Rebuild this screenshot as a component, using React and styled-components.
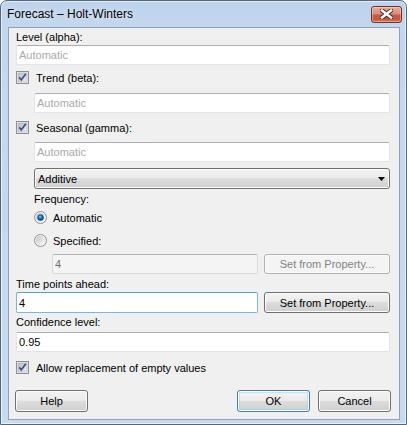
import React from "react";
import styled, { createGlobalStyle } from "styled-components";

const GlobalStyle = createGlobalStyle`
  html, body { margin: 0; padding: 0; background: #ffffff; }
  body { font-family: "Liberation Sans", Arial, sans-serif; }
  * { box-sizing: border-box; }
`;

const Window = styled.div`
  width: 407px;
  height: 425px;
  border: 1px solid #55677e;
  border-radius: 7px 7px 0 0;
  background: linear-gradient(180deg, #bdd2ec 0px, #c3d7ee 26px, #c7daf0 100%);
  box-shadow: inset 0 0 0 1px rgba(255, 255, 255, 0.6);
  display: flex;
  flex-direction: column;
`;

const TitleBar = styled.div`
  height: 26px;
  display: flex;
  align-items: center;
  justify-content: space-between;
  padding: 0 4px 1px 6px;
`;

const Title = styled.span`
  font-size: 12px;
  color: #000;
  text-shadow: 0 0 6px rgba(255, 255, 255, 0.9);
`;

const CloseButton = styled.div`
  width: 31px;
  height: 17px;
  margin-top: 1px;
  border: 1px solid #6f3226;
  border-radius: 3px;
  background: linear-gradient(180deg, #e9ab9b 0%, #dc8c77 45%, #c85a3f 55%, #c9553a 80%, #d77a5e 100%);
  box-shadow: inset 0 0 0 1px rgba(255, 255, 255, 0.35);
  display: flex;
  align-items: center;
  justify-content: center;
`;

const Body = styled.div`
  flex: 1;
  margin: 0 6px 4px 7px;
  border: 1px solid #8ea4bd;
  background: #f0f0f0;
  padding: 3px 9px 0 7px;
  display: flex;
  flex-direction: column;
  font-size: 11px;
  color: #000;
`;

const Label = styled.div`
  flex: none;
  height: 13px;
  line-height: 13px;
  margin-top: ${(p) => p.$mt || 0}px;
  margin-left: ${(p) => p.$ml || 0}px;
  white-space: nowrap;
`;

const TextBox = styled.input`
  display: block;
  flex: none;
  height: ${(p) => p.$h || 20}px;
  width: auto;
  ${(p) => (p.$grow ? "flex: 1; min-width: 0;" : "")}
  margin: ${(p) => p.$mt || 0}px 0 0 ${(p) => p.$ml || 0}px;
  padding: 0 2px;
  font: inherit;
  font-size: 11px;
  color: #000;
  background: #ffffff;
  border: 1px solid #e2e3ea;
  border-top-color: #abadb3;
  border-radius: 2px;
  outline: none;
  &::placeholder { color: #a9a9a9; }
  &:disabled {
    background: #f4f4f4;
    border-color: #d9d9d9;
    border-top-color: #adb2b5;
    color: #6d6d6d;
  }
  ${(p) =>
    p.$focused &&
    `
    border: 1px solid #7eb4ea;
    border-top-color: #569de5;
  `}
`;

const Row = styled.div`
  flex: none;
  display: flex;
  align-items: center;
  gap: ${(p) => p.$gap || 0}px;
  margin-top: ${(p) => p.$mt || 0}px;
  margin-left: ${(p) => p.$ml || 0}px;
`;

const Button = styled.button`
  width: ${(p) => p.$w || 73}px;
  height: ${(p) => p.$h || 22}px;
  flex: none;
  padding: 0;
  margin-left: ${(p) => p.$ml || 0}px;
  font: inherit;
  font-size: 11px;
  color: #000;
  border: 1px solid ${(p) => (p.$default ? "#3c7fb1" : "#707070")};
  border-radius: 3px;
  background: linear-gradient(180deg, #f2f2f2 0%, #ebebeb 49%, #dddddd 50%, #cfcfcf 100%);
  box-shadow: ${(p) =>
    p.$default
      ? "inset 0 0 0 1px #ffffff, inset 0 0 0 2px rgba(110, 200, 240, 0.35)"
      : "inset 0 0 0 1px #fcfcfc"};
  &:disabled {
    color: #838383;
    border-color: #adb2b5;
    background: #f4f4f4;
    box-shadow: inset 0 0 0 1px #fcfcfc;
  }
`;

const Dropdown = styled.div`
  flex: none;
  height: 21px;
  margin: 6px 0 0 18px;
  border: 1px solid #707070;
  border-radius: 3px;
  background: linear-gradient(180deg, #f2f2f2 0%, #ebebeb 49%, #dddddd 50%, #cfcfcf 100%);
  box-shadow: inset 0 0 0 1px #fcfcfc;
  display: flex;
  align-items: center;
  justify-content: space-between;
  padding: 0 4px 0 3px;
`;

const CheckRow = styled.div`
  flex: none;
  display: flex;
  align-items: center;
  height: 13px;
  margin-top: ${(p) => p.$mt || 0}px;
  margin-left: ${(p) => p.$ml || 0}px;
  gap: ${(p) => p.$gap || 7}px;
`;

const ButtonBar = styled.div`
  flex: none;
  display: flex;
  align-items: center;
  margin: 16px -1px 0 -1px;
`;

const Spacer = styled.div`
  flex: 1;
`;

function CheckBox() {
  return (
    <svg width="13" height="13" viewBox="0 0 13 13">
      <defs>
        <linearGradient id="cbg" x1="0" y1="0" x2="1" y2="1">
          <stop offset="0" stopColor="#b7bcc4" />
          <stop offset="1" stopColor="#eef0f3" />
        </linearGradient>
      </defs>
      <rect x="0.5" y="0.5" width="12" height="12" fill="#f2f2f2" stroke="#8e8f8f" />
      <rect x="2" y="2" width="9" height="9" fill="url(#cbg)" stroke="#a8adb5" strokeWidth="0.6" />
      <path d="M3.2 6.4 L5.3 8.9 L9.8 2.8" fill="none" stroke="#3b4e8c" strokeWidth="1.7" />
    </svg>
  );
}

function Radio({ checked }) {
  return (
    <svg width="13" height="13" viewBox="0 0 13 13">
      <defs>
        <linearGradient id="rbg" x1="0" y1="0" x2="1" y2="1">
          <stop offset="0" stopColor="#c4c4c4" />
          <stop offset="1" stopColor="#fbfbfb" />
        </linearGradient>
        <radialGradient id="rdot" cx="0.45" cy="0.4" r="0.6">
          <stop offset="0" stopColor="#7fd0ff" />
          <stop offset="0.45" stopColor="#1b74bd" />
          <stop offset="1" stopColor="#0b3566" />
        </radialGradient>
      </defs>
      <circle cx="6.5" cy="6.5" r="6" fill="#f4f4f4" stroke="#8f8f8f" />
      <circle cx="6.5" cy="6.5" r="4.6" fill="url(#rbg)" />
      {checked && <circle cx="6.5" cy="6.5" r="3.2" fill="url(#rdot)" />}
    </svg>
  );
}

function CloseGlyph() {
  return (
    <svg width="13" height="10" viewBox="0 0 13 10">
      <path d="M2 1.5 L11 8.5 M11 1.5 L2 8.5" stroke="#4a2119" strokeWidth="4.4" strokeLinecap="square" />
      <path d="M2 1.5 L11 8.5 M11 1.5 L2 8.5" stroke="#ffffff" strokeWidth="2.6" strokeLinecap="square" />
    </svg>
  );
}

function Arrow() {
  return (
    <svg width="7" height="4" viewBox="0 0 7 4">
      <path d="M0 0 H7 L3.5 4 Z" fill="#000" />
    </svg>
  );
}

export default function App() {
  return (
    <>
      <GlobalStyle />
      <Window>
        <TitleBar>
          <Title>Forecast – Holt-Winters</Title>
          <CloseButton>
            <CloseGlyph />
          </CloseButton>
        </TitleBar>
        <Body>
          <Label $mt={0}>Level (alpha):</Label>
          <TextBox $mt={1} placeholder="Automatic" readOnly />

          <CheckRow $mt={6}>
            <CheckBox />
            <span>Trend (beta):</span>
          </CheckRow>
          <TextBox $mt={9} $ml={18} placeholder="Automatic" readOnly />

          <CheckRow $mt={8}>
            <CheckBox />
            <span>Seasonal (gamma):</span>
          </CheckRow>
          <TextBox $mt={8} $ml={18} placeholder="Automatic" readOnly />

          <Dropdown>
            <span>Additive</span>
            <Arrow />
          </Dropdown>

          <Label $mt={4} $ml={18}>Frequency:</Label>
          <CheckRow $mt={5} $ml={18} $gap={6}>
            <Radio checked />
            <span>Automatic</span>
          </CheckRow>
          <CheckRow $mt={10} $ml={18} $gap={6}>
            <Radio />
            <span>Specified:</span>
          </CheckRow>
          <Row $mt={7} $ml={36} $gap={6}>
            <TextBox $grow $h={20} defaultValue="4" disabled />
            <Button $w={126} $h={20} disabled>Set from Property...</Button>
          </Row>

          <Label $mt={4}>Time points ahead:</Label>
          <Row $mt={1} $gap={6}>
            <TextBox $grow $h={21} $focused defaultValue="4" readOnly />
            <Button $w={126} $h={21}>Set from Property...</Button>
          </Row>

          <Label $mt={3}>Confidence level:</Label>
          <TextBox $mt={3} defaultValue="0.95" readOnly />

          <CheckRow $mt={9}>
            <CheckBox />
            <span>Allow replacement of empty values</span>
          </CheckRow>

          <ButtonBar>
            <Button>Help</Button>
            <Spacer />
            <Button $default>OK</Button>
            <Button $ml={8}>Cancel</Button>
          </ButtonBar>
        </Body>
      </Window>
    </>
  );
}
